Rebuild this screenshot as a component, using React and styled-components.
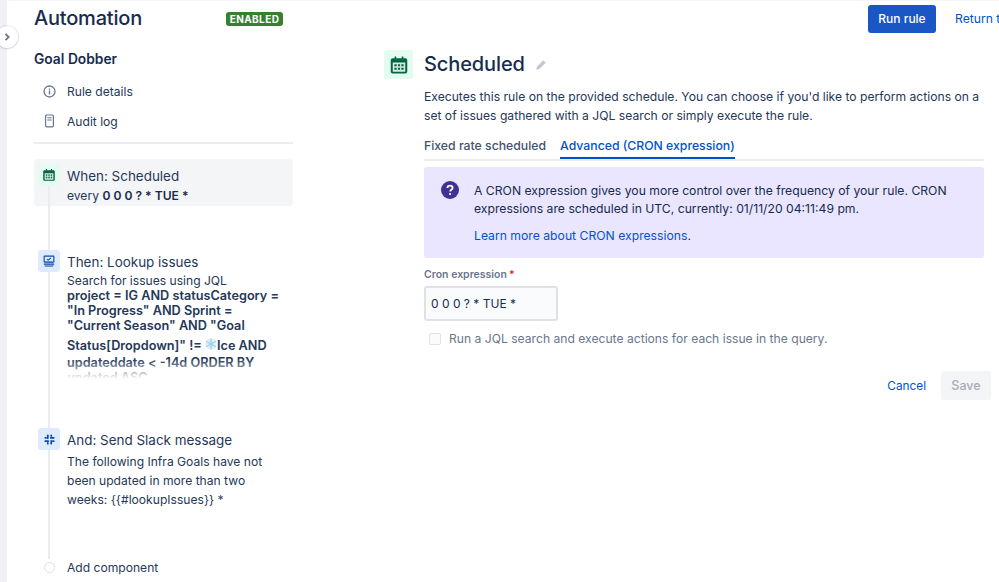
import styled, { createGlobalStyle } from "styled-components";

const Global = createGlobalStyle`
  html, body { margin: 0; height: 100%; overflow: hidden; background: #fff; }
  body { font-family: Inter, "Liberation Sans", sans-serif; color: #172b4d; font-size: 12.2px; }
`;

const Page = styled.div`
  display: flex;
  width: 999px;
  height: 582px;
  overflow: hidden;
  position: relative;
  box-shadow: inset 0 1px 0 #f4f5f7;
`;

const Rail = styled.div`
  width: 7px;
  flex: none;
  background: #f0f1f4;
`;

const Expander = styled.div`
  position: absolute;
  left: -4px;
  top: 26px;
  width: 22px;
  height: 22px;
  border-radius: 50%;
  background: #fff;
  box-shadow: 0 0 0 1px rgba(9, 30, 66, 0.08), 0 1px 2px rgba(9, 30, 66, 0.12);
  display: flex;
  align-items: center;
  justify-content: center;
  color: #6b778c;
`;

const Content = styled.div`
  flex: 1;
  min-width: 0;
  padding-left: 27px;
`;

const Header = styled.header`
  display: flex;
  align-items: center;
  height: 35px;
  padding-top: 1px;
  white-space: nowrap;
`;

const AppTitle = styled.h1`
  margin: 0;
  padding-bottom: 2px;
  flex: none;
  width: 192px;
  font-size: 20px;
  font-weight: 500;
  letter-spacing: -0.2px;
`;

const Badge = styled.span`
  flex: none;
  background: #36802f;
  color: #fff;
  font-size: 10px;
  font-weight: 700;
  letter-spacing: 0.4px;
  line-height: 14px;
  width: 57px;
  text-align: center;
  border-radius: 3px;
`;

const RunButton = styled.button`
  flex: none;
  margin-left: 585px;
  width: 68px;
  height: 28px;
  padding: 0;
  border: 0;
  border-radius: 3px;
  background: #1a56c4;
  color: #fff;
  font: 500 12px Inter, sans-serif;
`;

const ReturnLink = styled.a`
  flex: none;
  margin-left: 19px;
  color: #0052cc;
  font-size: 12.2px;
`;

const Columns = styled.div`
  display: flex;
`;

const Sidebar = styled.aside`
  width: 259px;
  flex: none;
`;

const RuleName = styled.h2`
  margin: 14px 0 0;
  font-size: 13.8px;
  line-height: 19px;
  font-weight: 600;
`;

const NavItem = styled.div`
  display: flex;
  align-items: center;
  height: 30px;
  padding-left: 9px;
  gap: 11px;
  font-size: 12.1px;
  color: #253858;
  svg { color: #6b778c; }
`;

const NavList = styled.nav`
  margin-top: 7px;
  padding-bottom: 6px;
  border-bottom: 2px solid #ebecf0;
`;

const Steps = styled.div`
  position: relative;
  margin-top: 15px;
  &::before {
    content: "";
    position: absolute;
    left: 14px;
    top: 20px;
    height: 380px;
    width: 2px;
    background: #ebecf0;
  }
`;

const Step = styled.div`
  display: flex;
  gap: 7px;
  margin-top: ${({ $gap }) => $gap || 0}px;
  padding: 5px 0 0 4px;
  height: ${({ $height }) => $height}px;
  box-sizing: border-box;
  border-radius: 4px;
  background: ${({ $active }) => ($active ? "#f4f5f7" : "transparent")};
`;

const StepIcon = styled.div`
  position: relative;
  width: 22px;
  height: 22px;
  flex: none;
  border-radius: 3px;
  background: ${({ $bg }) => $bg};
  color: ${({ $fg }) => $fg};
  display: flex;
  align-items: center;
  justify-content: center;
`;

const StepBody = styled.div`
  position: relative;
  min-width: 0;
  flex: 1;
  padding-right: 12px;
`;

const StepTitle = styled.div`
  font-size: 13.45px;
  line-height: 24px;
  color: #253858;
`;

const StepText = styled.div`
  font-size: 12.1px;
  line-height: ${({ $lh }) => $lh || 19}px;
  color: #253858;
  strong { font-weight: 600; color: #172b4d; }
`;

const JqlClip = styled.div`
  position: relative;
  height: 91px;
  overflow: hidden;
  font-size: 12.7px;
  line-height: 15px;
  font-weight: 600;
  color: #253858;
  &::after {
    content: "";
    position: absolute;
    left: 0;
    right: 0;
    bottom: 0;
    height: 20px;
    background: linear-gradient(rgba(255, 255, 255, 0), #fff);
  }
`;

const Flake = styled.svg`
  display: inline-block;
  width: 12px;
  height: 22px;
  vertical-align: -5px;
  color: #9fcdec;
`;

const AddDot = styled.div`
  position: relative;
  width: 9px;
  height: 9px;
  margin-left: 6px;
  flex: none;
  border-radius: 50%;
  border: 1px solid #dfe1e6;
  background: #fff;
`;

const AddRow = styled.div`
  display: flex;
  align-items: center;
  gap: 12px;
  padding: 1px 0 0 4px;
  font-size: 12.1px;
  color: #253858;
`;

const Main = styled.main`
  margin-left: 91px;
  flex: none;
  width: 607px;
`;

const MainHead = styled.div`
  display: flex;
  align-items: center;
  gap: 11px;
  margin-top: 14px;
`;

const MainIcon = styled.div`
  width: 29px;
  height: 29px;
  border-radius: 3px;
  background: #e3fcef;
  color: #006644;
  display: flex;
  align-items: center;
  justify-content: center;
`;

const MainTitle = styled.h2`
  margin: 0;
  padding-bottom: 1px;
  font-size: 20px;
  line-height: 28px;
  font-weight: 500;
  letter-spacing: -0.1px;
`;

const Pencil = styled.svg`
  margin-left: -1px;
  color: #c1c7d0;
`;

const Form = styled.div`
  margin-left: 40px;
  width: 560px;
`;

const Intro = styled.p`
  margin: 8px 0 0;
  font-size: 12.15px;
  line-height: 19px;
  color: #253858;
`;

const Tabs = styled.div`
  display: flex;
  margin-top: 8px;
  border-bottom: 2px solid #ebecf0;
  height: 26px;
`;

const Tab = styled.div`
  font-size: 12.25px;
  font-weight: 500;
  line-height: 26px;
  height: 26px;
  box-sizing: border-box;
  margin-right: ${({ $active }) => ($active ? 0 : 14)}px;
  color: ${({ $active }) => ($active ? "#0052cc" : "#42526e")};
  border-bottom: 2px solid ${({ $active }) => ($active ? "#0052cc" : "transparent")};
`;

const Notice = styled.div`
  display: flex;
  gap: 15px;
  margin-top: 6px;
  height: 91px;
  box-sizing: border-box;
  padding: 14px 16px 0 17px;
  border-radius: 3px;
  background: #eae6ff;
`;

const NoticeIcon = styled.svg`
  flex: none;
  color: #403294;
`;

const NoticeBody = styled.div`
  padding-top: 1px;
  font-size: 12.2px;
  line-height: 18px;
  color: #172b4d;
  a { color: #0052cc; }
  p { margin: 0 0 9px; }
`;

const FieldLabel = styled.div`
  margin-top: 10px;
  font-size: 10.5px;
  line-height: 14px;
  font-weight: 600;
  color: #6b778c;
  span { color: #de350b; margin-left: 2px; }
`;

const CronInput = styled.div`
  margin-top: 4px;
  width: 134px;
  height: 35px;
  box-sizing: border-box;
  border: 2px solid #dfe1e6;
  border-radius: 3px;
  background: #fafbfc;
  padding-left: 5px;
  font-size: 12px;
  line-height: 31px;
`;

const CheckRow = styled.div`
  display: flex;
  align-items: center;
  gap: 8px;
  margin-top: 11px;
  padding-left: 5px;
  font-size: 12.13px;
  line-height: 14px;
  color: #6b778c;
`;

const CheckBox = styled.div`
  width: 12px;
  height: 12px;
  box-sizing: border-box;
  border: 1px solid #dfe1e6;
  border-radius: 2px;
  background: #fafbfc;
`;

const Actions = styled.div`
  display: flex;
  align-items: center;
  justify-content: flex-end;
  gap: 15px;
  margin: 25px -7px 0 0;
`;

const CancelLink = styled.a`
  font-size: 11.8px;
  color: #0052cc;
`;

const SaveButton = styled.div`
  width: 50px;
  height: 29px;
  border-radius: 3px;
  background: #f4f5f7;
  color: #a5adba;
  font-size: 12.5px;
  font-weight: 500;
  line-height: 29px;
  text-align: center;
`;

const Calendar = ({ size }) => (
  <svg width={size} height={size} viewBox="0 0 16 16">
    <path fill="currentColor" d="M3 2.5h1.5V1.2h1.3v1.3h4.4V1.2h1.3v1.3H13c1 0 1.6.7 1.6 1.6v9c0 .9-.7 1.6-1.6 1.6H3c-.9 0-1.6-.7-1.6-1.6v-9c0-.9.7-1.6 1.6-1.6z" />
    <path fill="#fff" opacity="0.85" d="M3 6h10v7.4H3z" />
    <path fill="currentColor" d="M4.3 7.3h1.8v1.6H4.3zM7.1 7.3h1.8v1.6H7.1zM9.9 7.3h1.8v1.6H9.9zM4.3 10.1h1.8v1.6H4.3zM7.1 10.1h1.8v1.6H7.1zM9.9 10.1h1.8v1.6H9.9z" />
  </svg>
);

const LookupIcon = () => (
  <svg width="12" height="12" viewBox="0 0 14 14">
    <path fill="currentColor" d="M2 .5h10c.8 0 1.3.5 1.3 1.3v5.9c0 .8-.5 1.3-1.3 1.3H2C1.2 9 .7 8.5.7 7.7V1.8C.7 1 1.2.5 2 .5z" />
    <path fill="#deebff" d="M2 2h10v5.5H2z" />
    <path fill="none" stroke="currentColor" strokeWidth="1.2" d="M4.5 4.7l1.6 1.3 3-2.500" />
    <path fill="currentColor" d="M1 10h12v1.3H1zM2 12.2h10v1.3H2z" />
  </svg>
);

const SlackIcon = () => (
  <svg width="11" height="11" viewBox="0 0 13 13" fill="currentColor">
    <rect x="3.5" y="0.5" width="2" height="5.5" rx="1" />
    <rect x="7.5" y="0.5" width="2" height="3" rx="1" />
    <rect x="7.5" y="7" width="2" height="5.5" rx="1" />
    <rect x="3.5" y="9.5" width="2" height="3" rx="1" />
    <rect x="0.5" y="3.5" width="3" height="2" rx="1" />
    <rect x="7" y="3.5" width="5.5" height="2" rx="1" />
    <rect x="0.5" y="7.5" width="5.5" height="2" rx="1" />
    <rect x="9.5" y="7.5" width="3" height="2" rx="1" />
  </svg>
);

const InfoIcon = () => (
  <svg width="13" height="13" viewBox="0 0 13 13">
    <circle cx="6.5" cy="6.5" r="5.5" fill="none" stroke="currentColor" strokeWidth="1.3" />
    <path fill="currentColor" d="M5.8 5.6h1.4v3.9H5.8zM5.8 3.4h1.4v1.3H5.8z" />
  </svg>
);

const LogIcon = () => (
  <svg width="13" height="14" viewBox="0 0 13 14">
    <rect x="2.6" y="1" width="7.8" height="11.8" rx="1" fill="none" stroke="currentColor" strokeWidth="1.2" />
    <path fill="currentColor" d="M4.3 3.2h4.4v1.1H4.3zM4.3 5.4h4.4v1.1H4.3z" />
  </svg>
);

const App = () => (
  <Page>
    <Global />
    <Rail />
    <Expander>
      <svg width="10" height="10" viewBox="0 0 10 10">
        <path d="M3.5 1.8L6.7 5 3.5 8.2" fill="none" stroke="currentColor" strokeWidth="1.8" />
      </svg>
    </Expander>
    <Content>
      <Header>
        <AppTitle>Automation</AppTitle>
        <Badge>ENABLED</Badge>
        <RunButton>Run rule</RunButton>
        <ReturnLink>Return to list</ReturnLink>
      </Header>
      <Columns>
        <Sidebar>
          <RuleName>Goal Dobber</RuleName>
          <NavList>
            <NavItem><InfoIcon />Rule details</NavItem>
            <NavItem><LogIcon />Audit log</NavItem>
          </NavList>
          <Steps>
            <Step $active $height={47}>
              <StepIcon $bg="#e3fcef" $fg="#006644"><Calendar size={14} /></StepIcon>
              <StepBody>
                <StepTitle>When: Scheduled</StepTitle>
                <StepText $lh={16}>every <strong>0 0 0 ? * TUE *</strong></StepText>
              </StepBody>
            </Step>
            <Step $gap={39} $height={178}>
              <StepIcon $bg="#deebff" $fg="#0747a6"><LookupIcon /></StepIcon>
              <StepBody>
                <StepTitle>Then: Lookup issues</StepTitle>
                <StepText $lh={14}>Search for issues using JQL</StepText>
                <JqlClip>
                  project = IG AND statusCategory = "In Progress" AND Sprint = "Current Season" AND "Goal Status[Dropdown]" !={" "}
                  <Flake viewBox="0 -5 12 22">
                    <circle cx="6" cy="6" r="5.5" fill="#dceefa" />
                    <path d="M6 .5v11M1.2 3.2l9.6 5.6M1.2 8.8l9.6-5.6" stroke="currentColor" strokeWidth="1.2" />
                  </Flake>
                  Ice AND updateddate &lt; -14d ORDER BY updated ASC
                </JqlClip>
              </StepBody>
            </Step>
            <Step $height={136}>
              <StepIcon $bg="#deebff" $fg="#0747a6"><SlackIcon /></StepIcon>
              <StepBody>
                <StepTitle>And: Send Slack message</StepTitle>
                <StepText>The following Infra Goals have not been updated in more than two weeks: {"{{#lookupIssues}}"} *</StepText>
              </StepBody>
            </Step>
            <AddRow><AddDot />Add component</AddRow>
          </Steps>
        </Sidebar>
        <Main>
          <MainHead>
            <MainIcon><Calendar size={20} /></MainIcon>
            <MainTitle>Scheduled</MainTitle>
            <Pencil width="12" height="12" viewBox="0 0 14 14">
              <path fill="currentColor" d="M9.7 1.5l2.8 2.8-7.5 7.5-3.6.8.8-3.6z" />
            </Pencil>
          </MainHead>
          <Form>
            <Intro>Executes this rule on the provided schedule. You can choose if you'd like to perform actions on a set of issues gathered with a JQL search or simply execute the rule.</Intro>
            <Tabs>
              <Tab>Fixed rate scheduled</Tab>
              <Tab $active>Advanced (CRON expression)</Tab>
            </Tabs>
            <Notice>
              <NoticeIcon width="18" height="18" viewBox="0 0 18 18">
                <circle cx="9" cy="9" r="9" fill="currentColor" />
                <path d="M6.4 7c.1-1.5 1.2-2.300 2.600-2.300 1.500 0 2.600.9 2.600 2.200 0 1.800-2.400 1.900-2.400 3.500" fill="none" stroke="#fff" strokeWidth="1.8" />
                <circle cx="9.1" cy="13" r="1.1" fill="#fff" />
              </NoticeIcon>
              <NoticeBody>
                <p>A CRON expression gives you more control over the frequency of your rule. CRON expressions are scheduled in UTC, currently: 01/11/20 04:11:49 pm.</p>
                <a>Learn more about CRON expressions</a>.
              </NoticeBody>
            </Notice>
            <FieldLabel>Cron expression<span>*</span></FieldLabel>
            <CronInput>0 0 0 ? * TUE *</CronInput>
            <CheckRow><CheckBox />Run a JQL search and execute actions for each issue in the query.</CheckRow>
            <Actions>
              <CancelLink>Cancel</CancelLink>
              <SaveButton>Save</SaveButton>
            </Actions>
          </Form>
        </Main>
      </Columns>
    </Content>
  </Page>
);

export default App;
